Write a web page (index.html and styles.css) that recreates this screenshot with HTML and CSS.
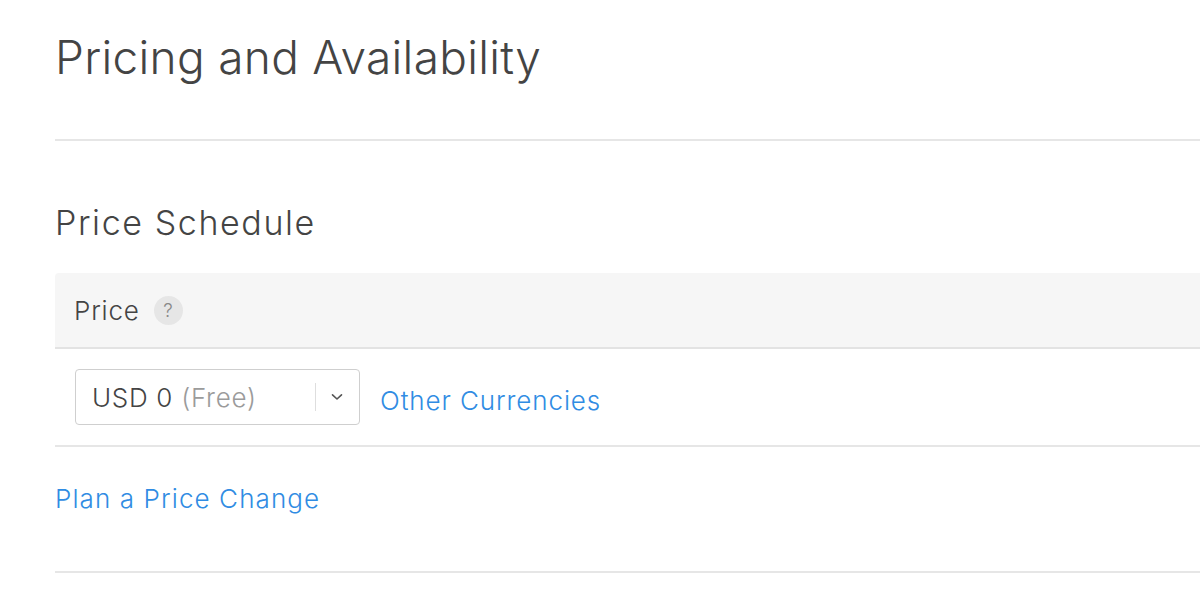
FILE: index.html
```html
<!DOCTYPE html>
<html>
<head>
<meta charset="utf-8">
<link rel="stylesheet" href="styles.css">
</head>
<body>
<main class="page">
  <h1 class="title">Pricing and Availability</h1>
  <hr class="rule">
  <h2 class="subtitle">Price Schedule</h2>
  <section class="panel">
    <div class="panel-head">
      <span class="label">Price</span>
      <span class="help">?</span>
    </div>
    <div class="panel-row">
      <div class="select">
        <span class="select-value">USD 0 <span class="muted">(Free)</span></span>
        <span class="select-sep"></span>
        <svg class="chev" width="12" height="8" viewBox="0 0 12 8"><path d="M1.5 1.8 L6 6 L10.5 1.8" fill="none" stroke="#555" stroke-width="1.6" stroke-linecap="round" stroke-linejoin="round"/></svg>
      </div>
      <a class="link other">Other Currencies</a>
    </div>
    <div class="panel-plan">
      <a class="link">Plan a Price Change</a>
    </div>
  </section>
</main>
</body>
</html>
```
FILE: styles.css
```css
html, body {
  margin: 0;
  padding: 0;
  background: #fff;
}
body {
  font-family: Inter, "Noto Sans", sans-serif;
  color: #3a3a3a;
  overflow: hidden;
}
.page {
  padding: 28px 0 0 55px;
}
.title {
  margin: 0;
  font-size: 46px;
  line-height: 58px;
  font-weight: 300;
  color: #444;
  letter-spacing: 0.3px;
}
.rule {
  margin: 53px 0 0 0;
  border: 0;
  height: 2px;
  background: #e6e6e6;
}
.subtitle {
  margin: 62px 0 0 0;
  font-size: 34px;
  line-height: 40px;
  font-weight: 300;
  color: #444;
  letter-spacing: 1.6px;
}
.panel {
  margin-top: 30px;
}
.panel-head {
  height: 74px;
  background: #f6f6f6;
  border-top-left-radius: 4px;
  border-bottom: 2px solid #e3e3e3;
  display: flex;
  align-items: center;
  padding-left: 19px;
  gap: 14px;
}
.label {
  font-size: 26px;
  font-weight: 300;
  color: #444;
  letter-spacing: 0.8px;
}
.help {
  width: 29px;
  height: 29px;
  border-radius: 50%;
  background: #e6e6e6;
  color: #888;
  font-size: 19px;
  font-weight: 300;
  display: flex;
  align-items: center;
  justify-content: center;
}
.panel-row {
  height: 96px;
  border-bottom: 2px solid #e6e6e6;
  display: flex;
  align-items: center;
  padding-left: 20px;
  gap: 20px;
}
.select {
  box-sizing: border-box;
  width: 285px;
  height: 56px;
  border: 1.5px solid #cfcfcf;
  border-radius: 4px;
  display: flex;
  align-items: center;
  padding-left: 16px;
}
.select-value {
  font-size: 26px;
  font-weight: 300;
  color: #444;
  letter-spacing: 0.7px;
  flex: 1;
  white-space: nowrap;
}
.muted {
  color: #9b9b9b;
}
.select-sep {
  width: 1px;
  height: 28px;
  background: #dedede;
  margin-right: 15px;
}
.chev {
  margin-right: 16px;
}
.link {
  color: #308ce3;
  font-size: 26px;
  font-weight: 300;
  letter-spacing: 0.9px;
  cursor: pointer;
}
.other {
  margin-top: 6px;
}
.panel-plan {
  height: 126px;
  box-sizing: border-box;
  padding-top: 37px;
  border-bottom: 2px solid #e6e6e6;
}
.panel-plan .link {
  display: block;
  line-height: 30px;
  letter-spacing: 1.1px;
}
```
